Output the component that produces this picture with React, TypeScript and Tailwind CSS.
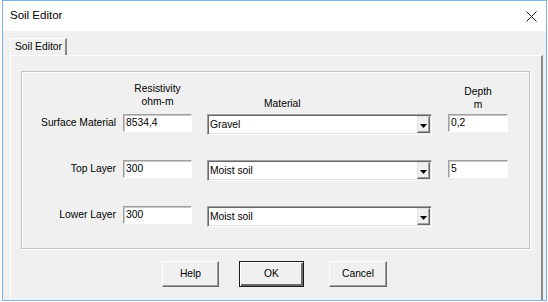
import React from "react";

const font = { fontFamily: '"Liberation Sans", Arial, sans-serif' };

const rows = [
  { label: "Surface Material", resistivity: "8534,4", material: "Gravel", depth: "0,2" },
  { label: "Top Layer", resistivity: "300", material: "Moist soil", depth: "5" },
  { label: "Lower Layer", resistivity: "300", material: "Moist soil", depth: null },
];

function EditBox({ value, width }: { value: string; width: string }) {
  return (
    <div
      className={`flex h-[18px] items-center border border-t-[#a0a0a0] border-l-[#a0a0a0] border-b-[#ffffff] border-r-[#ffffff] bg-white pl-[2px] text-[10.3px] text-black shadow-[inset_1px_1px_0_#c6c6c6] ${width}`}
    >
      {value}
    </div>
  );
}

function ComboBox({ value }: { value: string }) {
  return (
    <div className="ml-[15px] flex h-[21px] w-[225px] items-center border border-t-[#a0a0a0] border-l-[#a0a0a0] border-b-[#ffffff] border-r-[#ffffff] bg-white shadow-[inset_1px_1px_0_#696969,inset_-1px_-1px_0_#e3e3e3]">
      <span className="flex-1 pl-[2px] text-[10.3px] text-black">{value}</span>
      <div className="mr-[1px] flex h-[17px] w-[13px] items-center justify-center border border-t-[#e3e3e3] border-l-[#e3e3e3] border-b-[#696969] border-r-[#696969] bg-[#f0f0f0] shadow-[inset_-1px_-1px_0_#a0a0a0]">
        <svg width="7" height="4" viewBox="0 0 7 4" className="mt-[2px]">
          <path d="M0 0H7L3.5 4Z" fill="#000" />
        </svg>
      </div>
    </div>
  );
}

function Button({ label, width, primary }: { label: string; width: string; primary?: boolean }) {
  return (
    <div
      className={`flex h-[26px] items-center justify-center text-[10.3px] text-black ${width} ${
        primary
          ? "border border-[#1a1a1a] bg-[#f0f0f0] shadow-[inset_1px_1px_0_#ffffff,inset_-2px_-2px_0_#696969]"
          : "border border-t-[#ffffff] border-l-[#ffffff] border-b-[#696969] border-r-[#696969] bg-[#f0f0f0] shadow-[inset_-1px_-1px_0_#a0a0a0]"
      }`}
    >
      {label}
    </div>
  );
}

export default function App() {
  return (
    <div className="h-[302px] w-[548px] bg-white pb-[1px] pl-[2px] pr-[1px]" style={font}>
      <div className="flex h-full flex-col border border-[#7fb3e6]">
        {/* title bar */}
        <div className="flex h-[30px] items-center justify-between bg-white pl-[7px] pr-[9px]">
          <span className="text-[11.5px] text-black">Soil Editor</span>
          <svg width="11" height="11" viewBox="0 0 11 11">
            <path d="M0.5 0.5L10.5 10.5M10.5 0.5L0.5 10.5" stroke="#1a1a1a" strokeWidth="1" />
          </svg>
        </div>

        <div className="flex flex-1 flex-col bg-[#f0f0f0] pl-[7px] pr-[3px] pt-[7px]">
          {/* tab */}
          <div className="flex">
            <div className="flex h-[17px] w-[57px] items-center whitespace-nowrap border-l border-t border-r-2 border-l-[#ffffff] border-t-[#ffffff] border-r-[#8a8a8a] pl-[4px] text-[10.3px] text-black">
              Soil Editor
            </div>
          </div>

          {/* tab page */}
          <div className="flex flex-1 flex-col border-l border-t border-r-2 border-l-[#ffffff] border-t-[#ffffff] border-r-[#8a8a8a] pl-[10px] pt-[15px]">
            {/* group box */}
            <div className="h-[178px] w-[509px] border border-[#c2c2c2] pt-[10px] shadow-[inset_1px_1px_0_#ffffff,1px_1px_0_#ffffff]">
              {/* headers */}
              <div className="flex h-[32px] text-[10.3px] leading-[13px] text-black">
                <div className="w-[94px]" />
                <div className="ml-[7px] w-[69px] text-center">
                  <div>Resistivity</div>
                  <div>ohm-m</div>
                </div>
                <div className="ml-[15px] w-[225px] pl-[57px] pt-[15px]">Material</div>
                <div className="ml-[16px] w-[60px] pt-[3px] text-center">
                  <div>Depth</div>
                  <div>m</div>
                </div>
              </div>

              <div className="flex flex-col gap-[25px]">
                {rows.map((row) => (
                  <div key={row.label} className="flex items-start">
                    <div className="flex h-[18px] w-[94px] items-center justify-end text-[10.3px] text-black">
                      {row.label}
                    </div>
                    <div className="ml-[7px]">
                      <EditBox value={row.resistivity} width="w-[69px]" />
                    </div>
                    <ComboBox value={row.material} />
                    {row.depth !== null && (
                      <div className="ml-[16px]">
                        <EditBox value={row.depth} width="w-[60px]" />
                      </div>
                    )}
                  </div>
                ))}
              </div>
            </div>

            {/* buttons */}
            <div className="mt-[12px] flex pl-[141px]">
              <Button label="Help" width="w-[57px]" />
              <div className="ml-[20px]">
                <Button label="OK" width="w-[65px]" primary />
              </div>
              <div className="ml-[25px]">
                <Button label="Cancel" width="w-[58px]" />
              </div>
            </div>
          </div>
        </div>
      </div>
    </div>
  );
}
